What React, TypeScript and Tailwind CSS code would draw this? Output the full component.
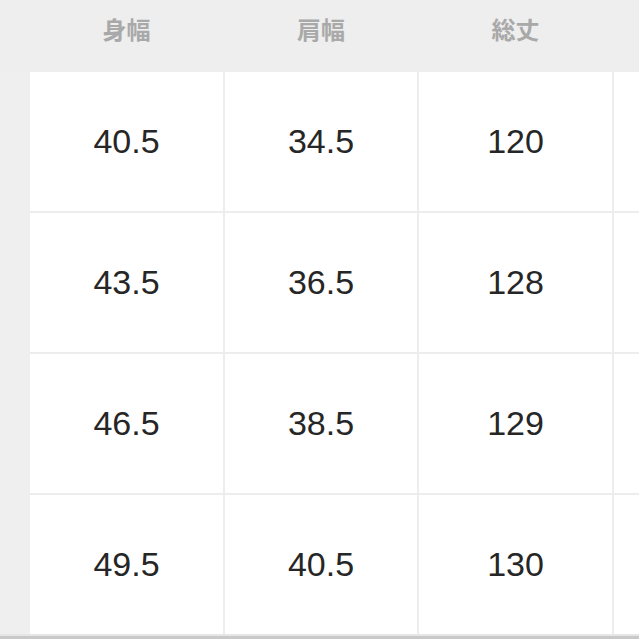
import React from "react";

const headers = ["身幅", "肩幅", "総丈"];
const rows = [
  ["40.5", "34.5", "120"],
  ["43.5", "36.5", "128"],
  ["46.5", "38.5", "129"],
  ["49.5", "40.5", "130"],
];

export default function App() {
  return (
    <div className="w-[639px] h-[639px] overflow-hidden bg-[#eeeeee] flex flex-col">
      <div className="h-[72px] flex shrink-0 bg-[#eeeeee]">
        <div className="w-[30px] shrink-0" />
        <div className="grid grid-cols-[193px_192px_193px_1fr] gap-x-[2px] flex-1">
          {headers.map((h) => (
            <div
              key={h}
              className="flex justify-center pt-[14px] text-[24px] font-bold text-[#a9a9a9] leading-[30px]"
              style={{ fontFamily: '"Noto Sans CJK JP", sans-serif' }}
            >
              {h}
            </div>
          ))}
          <div />
        </div>
      </div>
      <div className="flex flex-1">
        <div className="w-[30px] shrink-0 bg-[#efefef]" />
        <div className="flex-1 flex flex-col">
          <div className="grid grid-cols-[193px_192px_193px_1fr] grid-rows-[139px_139px_139px_139px] gap-[2px] bg-[#ededed]">
            {rows.map((r, i) => (
              <React.Fragment key={i}>
                {r.map((v, j) => (
                  <div
                    key={j}
                    className="bg-white flex items-center justify-center text-[34px] text-[#262626]"
                    style={{ fontFamily: '"Liberation Sans", Arial, sans-serif' }}
                  >
                    {v}
                  </div>
                ))}
                <div className="bg-white" />
              </React.Fragment>
            ))}
          </div>
        </div>
      </div>
      <div className="h-[2px] bg-[#e6e6e6] shrink-0" />
      <div className="h-[3px] bg-[#c9c9c9] shrink-0" />
    </div>
  );
}
